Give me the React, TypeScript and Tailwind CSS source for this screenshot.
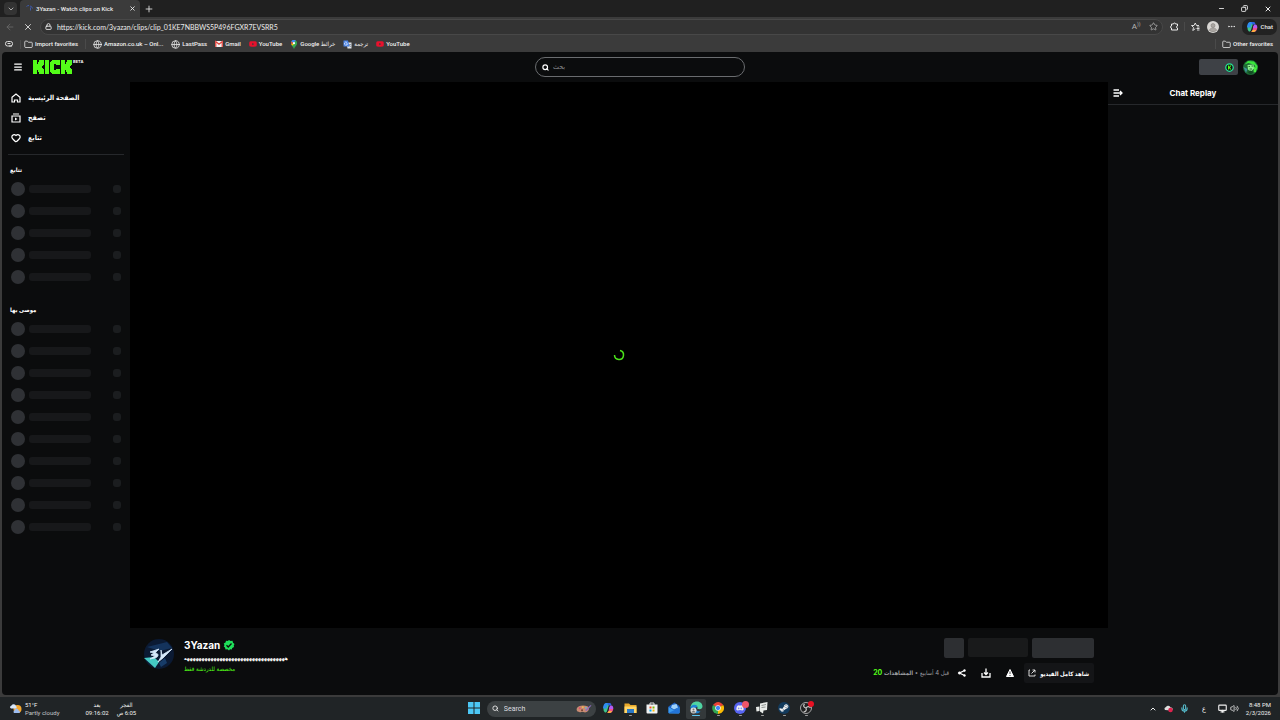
import type { ReactNode } from "react";
import {
  ArrowLeft,
  ChevronDown,
  ChevronUp,
  Copy,
  Ellipsis,
  Folder,
  Globe,
  Heart,
  Lock,
  Menu,
  Mic,
  Minus,
  Monitor,
  Plus,
  Search,
  Star,
  Volume2,
  X,
} from "lucide-react";
import { FaYoutube, FaDiscord, FaSteamSymbol } from "react-icons/fa";

const followed = [1, 2, 3, 4, 5];
const recommended = [1, 2, 3, 4, 5, 6, 7, 8, 9, 10];

const ui = "font-[Roboto,'DejaVu_Sans_Condensed','DejaVu_Sans',sans-serif]";

function CopilotIcon({ size }: { size: number }) {
  return (
    <svg width={size} height={size} viewBox="0 0 24 24">
      <path d="M4 8c1-4 3-6 6-6h5L10 18c-1 3-3 4-5 2-3-3-2-8-1-12z" fill="#3fc58b" />
      <path d="M4 5c1-2 3-3 5-3h6c-2 0-3 1-4 4L9 13H2c0-3 1-6 2-8z" fill="#2f8cf0" />
      <path d="M11 2h4c2 0 3 1 3.500 3l.5 2h-7z" fill="#2b62e0" />
      <path d="M15 22H9c2 0 3-1 4-4l2-8h5c3 0 3 3 2 6-1 4-3 6-7 6z" fill="#f0508c" />
      <path d="M18 7c4 0 5 3 4 7h-8l1-4c.5-2 1.500-3 3-3z" fill="#b45af2" />
      <path d="M9 22c2 0 3-1 4-4h7c-1 3-3 4-6 4z" fill="#ffb13d" />
    </svg>
  );
}

function KickLogo() {
  return (
    <svg width="41" height="16" viewBox="0 0 41 16" role="img" aria-label="Kick">
      <g fill="#53fc18">
        <path d="M1 1h4v4h1V3h1V1h5v5h-1v1h-1v2h1v1h1v5H7v-2H6v-2H5v4H1z" />
        <path d="M13 1h4v14h-4z" />
        <path d="M20 1h8v5h-4V5h-2v6h2v-1h4v5h-8v-1h-1v-1h-1V3h1V2h1z" />
        <path d="M29 1h4v4h1V3h1V1h5v5h-1v1h-1v2h1v1h1v5h-5v-2h-1v-2h-1v4h-4z" />
      </g>
    </svg>
  );
}

function MapPin() {
  return (
    <svg width="8" height="9" viewBox="0 0 18 20">
      <path d="M9 0C5 0 2 3 2 7c0 5 5 7 7 13 2-6 7-8 7-13 0-4-3-7-7-7z" fill="#34a853" />
      <path d="M9 0C6 0 4 1 3 3l4 4 6-6c-1-1-2-1-4-1z" fill="#4285f4" />
      <path d="M3 3C2 5 2 8 3 10l4-4z" fill="#ea4335" />
      <path d="M3 10l2 3 6-6-3-1z" fill="#fbbc04" />
      <circle cx="9" cy="7" r="2.500" fill="#fff" />
    </svg>
  );
}

function TranslateIcon() {
  return (
    <svg width="9" height="9" viewBox="0 0 18 18">
      <path d="M7 5h10v12H9z" fill="#dfe3e8" />
      <path d="M1 1h9l3 12H1z" fill="#4a84e8" />
      <path d="M9 7.500A3 3 0 1 1 8 5M9 7.500H6.500" stroke="#fff" strokeWidth="1.300" fill="none" />
      <path d="M12 9h4M14 8v1c0 2-1 3-2 4M13 11l3 3" stroke="#5b6b80" fill="none" />
    </svg>
  );
}

function GmailIcon() {
  return (
    <svg width="8" height="8" viewBox="0 0 16 14">
      <path d="M0 1h16v12H0z" fill="#f3f3f3" />
      <path d="M1.500 13V2L8 7.500 14.500 2v11" stroke="#e0433c" strokeWidth="2.500" fill="none" />
    </svg>
  );
}

function Bookmark({ icon, children }: { icon: ReactNode; children: ReactNode }) {
  return (
    <a href="#" className="flex items-center gap-[2px] whitespace-nowrap text-[6px] leading-[10px] font-medium text-[#f2f2f2]">
      {icon}
      <span>{children}</span>
    </a>
  );
}

function BrowserChrome() {
  return (
    <header className={`shrink-0 bg-[#3b3b3b] text-[#ececec] ${ui}`}>
      <div className="flex h-[17px] items-center bg-[#202020]">
        <button aria-label="Tab actions" className="ml-1 flex h-[13px] w-[13px] items-center justify-center rounded-[4px] bg-[#333]">
          <ChevronDown size={8} />
        </button>
        <div className="ml-[3px] flex h-full w-[120px] items-center rounded-t-[4px] bg-[#3b3b3b] pr-[3px] pl-[6px]">
          <svg width="7" height="7" viewBox="0 0 14 14" fill="none" stroke="#3f62c4" strokeWidth="1.600">
            <path d="M1 3a7 7 0 0 1 5-2M8 2a6 6 0 0 1 5 5M9 5v6" />
          </svg>
          <span className="ml-[3px] grow whitespace-nowrap text-[6px] font-medium">3Yazan - Watch clips on Kick</span>
          <button aria-label="Close tab" className="p-px"><X size={7} strokeWidth={3} /></button>
        </div>
        <button aria-label="New tab" className="ml-1"><Plus size={10} /></button>
        <div className="ml-auto flex items-center gap-4 pr-2">
          <button aria-label="Minimize"><Minus size={7} strokeWidth={3} /></button>
          <button aria-label="Restore"><Copy size={7} strokeWidth={3} className="-scale-x-100" /></button>
          <button aria-label="Close"><X size={8} strokeWidth={3} /></button>
        </div>
      </div>

      <div className="flex h-[19px] items-center pl-[5px]">
        <button aria-label="Back" className="text-[#6b6b6b]"><ArrowLeft size={10} /></button>
        <button aria-label="Stop" className="ml-2"><X size={10} /></button>
        <div className="ml-[7px] flex h-[16px] grow items-center rounded-full border border-[#484848] bg-[#333] px-1">
          <Lock size={7} strokeWidth={3} />
          <input
            aria-label="Address"
            defaultValue="https://kick.com/3yazan/clips/clip_01KE7NBBWS5P496FGXR7EVSRR5"
            className="ml-[5px] h-[12px] min-w-0 grow bg-transparent font-[Lato,sans-serif] text-[7px] outline-none"
          />
          <span className="text-[8px] text-[#b5b5b5]">A<sup className="text-[5px]">))</sup></span>
          <Star size={9} className="ml-2 text-[#b5b5b5]" />
        </div>
        <div className="flex items-center pl-[7px]">
          <button aria-label="Extensions">
            <svg width="9" height="9" viewBox="0 0 18 18" fill="none" stroke="currentColor" strokeWidth="2">
              <path d="M3 4h4a2 2 0 0 1 4 0h4v4a2 2 0 0 0 0 4v4H3v-4M3 4v4" />
              <path d="M3 8a2 2 0 0 0 0 4" />
            </svg>
          </button>
          <span className="ml-[5px] h-[9px] w-px bg-[#4a4a4a]" />
          <button aria-label="Favorites" className="ml-[6px]">
            <svg width="9" height="9" viewBox="0 0 18 18" fill="none" stroke="currentColor" strokeWidth="1.800">
              <path d="M16 7h-5L8.500 2 6 7H1l4 4-1.500 6 5-3.500" />
              <path d="M12 10h5M11 13h6M12 16h5" />
            </svg>
          </button>
          <button aria-label="Profile" className="ml-[7px]">
            <svg width="12" height="12" viewBox="0 0 24 24">
              <circle cx="12" cy="12" r="12" fill="#d9d7d4" />
              <circle cx="12" cy="9" r="4" fill="#aaa6a2" stroke="#77736f" />
              <path d="M5 19c0-7 14-7 14 0-4 3-10 3-14 0z" fill="#aaa6a2" stroke="#77736f" />
            </svg>
          </button>
          <button aria-label="Settings" className="ml-[8px]"><Ellipsis size={9} /></button>
          <button className="mr-[3px] ml-[6px] flex h-[16px] items-center gap-[3px] rounded-[7px] bg-[#222] px-1 text-[6px] font-medium">
            <CopilotIcon size={12} />
            Chat
          </button>
        </div>
      </div>

      <div className="flex h-[16px] items-center pl-[5px]">
        <svg width="8" height="8" viewBox="0 0 16 16" fill="none" stroke="#ddd" strokeWidth="2">
          <rect x="1" y="3" width="14" height="9" rx="4" />
          <path d="M5 7h6M8 12h6" />
        </svg>
        <span className="mr-[3px] ml-[7px] h-[9px] w-px bg-[#4a4a4a]" />
        <div className="flex items-center gap-[7px]">
          <Bookmark icon={<Folder size={9} />}>Import favorites</Bookmark>
          <div className="flex items-center gap-[8px] border-l border-[#4a4a4a] pl-[7px]">
            <Bookmark icon={<Globe size={9} />}>Amazon.co.uk – Onl...</Bookmark>
            <Bookmark icon={<Globe size={9} />}>LastPass</Bookmark>
            <Bookmark icon={<GmailIcon />}>Gmail</Bookmark>
            <Bookmark icon={<FaYoutube size={8} color="#e8112d" />}>YouTube</Bookmark>
            <Bookmark icon={<MapPin />}>Google خرائط</Bookmark>
            <Bookmark icon={<TranslateIcon />}>ترجمة</Bookmark>
            <Bookmark icon={<FaYoutube size={8} color="#e8112d" />}>YouTube</Bookmark>
          </div>
        </div>
        <div className="ml-auto border-l border-[#4a4a4a] pr-[7px] pl-[6px]">
          <Bookmark icon={<Folder size={9} />}>Other favorites</Bookmark>
        </div>
      </div>
    </header>
  );
}

function SkeletonRow() {
  return (
    <li className="flex h-[22px] items-center px-[9px]">
      <span className="h-[14px] w-[14px] rounded-full bg-[#2f3135]" />
      <span className="ml-[4px] h-[8px] w-[62px] rounded-[3px] bg-[#17181a]" />
      <span className="ml-auto h-[8px] w-[8px] rounded-[3px] bg-[#1b1d1f]" />
    </li>
  );
}

function Sidebar() {
  const link = "flex h-[20px] items-center gap-[7px] text-[7px] font-bold";
  return (
    <aside className="w-[128px] shrink-0 pt-[6px]">
      <nav className="px-[9px]">
        <a href="#" className={link}>
          <svg width="10" height="10" viewBox="0 0 20 20" fill="none" stroke="#fff" strokeWidth="2.400">
            <path d="M2 8.500L10 2l8 6.500V18h-5v-4H7v4H2z" />
          </svg>
          الصفحة الرئيسية
        </a>
        <a href="#" className={link}>
          <svg width="10" height="10" viewBox="0 0 20 20" fill="none" stroke="#fff" strokeWidth="2.400">
            <path d="M4 2h12M2 6h16v12H2z" />
            <path d="M8 9v6l5-3z" fill="#fff" stroke="none" />
          </svg>
          تصفح
        </a>
        <a href="#" className={link}>
          <Heart size={10} strokeWidth={3} />
          تتابع
        </a>
      </nav>
      <div className="mx-[6px] mt-[6px] h-px bg-[#26282b]" />
      <h2 className="mt-[9px] px-2 text-[6px] leading-[12px] font-bold">تتابع</h2>
      <ul className="mt-[2px]">{followed.map((n) => <SkeletonRow key={n} />)}</ul>
      <h2 className="mt-4 px-2 text-[6px] leading-[12px] font-bold">موصى بها</h2>
      <ul className="mt-[2px]">{recommended.map((n) => <SkeletonRow key={n} />)}</ul>
    </aside>
  );
}

function ClipInfo() {
  return (
    <section className="flex h-[67px] justify-between pt-[10px] pr-[14px] pl-[13px]">
      <div className="flex gap-[9px]">
        <svg width="32" height="32" viewBox="0 0 32 32">
          <circle cx="16" cy="16" r="15" fill="#0b1a33" />
          <path d="M1 20l11 10 4-6-5-5z" fill="#45c9c4" />
          <path d="M4 9l20-5 5 6-12 3z" fill="#14335c" />
          <path d="M16 25l6-5 2 5-6 4z" fill="#173c68" />
          <path d="M7 14l9-3-4 4c4 0 4 4 0 5l-5 1 5-3-4-1 3-2zM18 12l1 5 10-6-9 9-5 4 3-5z" fill="#d5e9fa" stroke="#d5e9fa" strokeWidth=".8" />
        </svg>
        <div>
          <div className="flex items-center gap-[3px]">
            <h1 className="text-[10px] leading-[14px] font-bold">3Yazan</h1>
            <svg width="12" height="12" viewBox="0 0 24 24">
              <path d="M12 2l3 2 4-.5 1 4 3 2.500-1.500 3L22 16l-3.500 2-1 3-3.500-.5L12 23l-3-2.500-4 .5-1-4-2.500-2L3 12 1.500 9 5 7l1-3.500 3.500.5z" fill="#1fe05a" />
              <path d="M7 12.500l3.500 3.500L17 9" stroke="#0b0c0d" strokeWidth="2.600" fill="none" />
            </svg>
          </div>
          <p className="h-[11px] text-[5px] leading-[12px] font-bold">ههههههههههههههههههههههههههههههههههه</p>
          <p className="text-[6px] leading-[11px] text-[#53fc18]">مخصصة للدردشة فقط</p>
        </div>
      </div>
      <div className="flex flex-col items-end gap-[5px]">
        <div className="flex gap-1">
          <span className="h-[20px] w-[20px] rounded-[2px] bg-[#2d2f32]" />
          <span className="h-[19px] w-[60px] rounded-[2px] bg-[#191a1b]" />
          <span className="h-[20px] w-[62px] rounded-[2px] bg-[#2d2f32]" />
        </div>
        <div className="flex items-center">
          <p dir="rtl" className="whitespace-nowrap text-[6px] text-[#9b9da0]">
            قبل 4 أسابيع • <span className="font-bold">المشاهدات</span> <b className="text-[7px] text-[#53fc18]">20</b>
          </p>
          <button aria-label="Share" className="ml-[8px]">
            <svg width="10" height="10" viewBox="0 0 20 20" fill="#fff" stroke="#fff">
              <path d="M15 5L5 10l10 5" fill="none" strokeWidth="2.500" />
              <circle cx="15" cy="5" r="2" /><circle cx="5" cy="10" r="2.500" /><circle cx="15" cy="15" r="2" />
            </svg>
          </button>
          <button aria-label="Download" className="ml-[14px]">
            <svg width="10" height="10" viewBox="0 0 20 20" fill="none" stroke="#fff" strokeWidth="2.600">
              <path d="M10 1v11M6 9l4 4 4-4M2 10v8h16v-8" />
            </svg>
          </button>
          <button aria-label="Report" className="ml-[14px]">
            <svg width="10" height="10" viewBox="0 0 20 20">
              <path d="M10 3l7 14H3z" fill="#fff" stroke="#fff" strokeWidth="2" strokeLinejoin="round" />
              <path d="M10 7v5M10 14v2" stroke="#0b0c0d" strokeWidth="1.500" />
            </svg>
          </button>
          <button className="ml-[9px] flex h-[20px] items-center gap-1 rounded-[2px] bg-[#141517] pr-[5px] pl-[4px] text-[6px] font-bold whitespace-nowrap">
            <svg width="8" height="8" viewBox="0 0 16 16" fill="none" stroke="#eee" strokeWidth="1.800">
              <path d="M4 2H2v12h12v-3M9 2h5v5M14 2L7 9" />
            </svg>
            شاهد كامل الفيديو
          </button>
        </div>
      </div>
    </section>
  );
}

function KickPage() {
  return (
    <div className="mx-[2px] flex min-h-0 grow flex-col overflow-hidden rounded-[4px] bg-[#0b0c0d] font-[Inter,'DejaVu_Sans_Condensed','DejaVu_Sans',sans-serif] text-white">
      <div className="grid h-[30px] shrink-0 grid-cols-[1fr_210px_1fr] items-center">
        <div className="flex items-center gap-[9px] pl-[11px]">
          <button aria-label="Menu"><Menu size={10} strokeWidth={3} /></button>
          <a href="#" className="flex items-start">
            <KickLogo />
            <span className="text-[4px] leading-[6px] font-bold">BETA</span>
          </a>
        </div>
        <label className="flex h-[20px] items-center gap-1 rounded-full border border-[#6a6c6f] px-[6px]">
          <Search size={7} strokeWidth={4} />
          <input type="search" placeholder="بحث" aria-label="بحث" className="min-w-0 grow bg-transparent text-[7px] outline-none placeholder:text-[#8b8d90]" />
        </label>
        <div className="flex items-center justify-end gap-[5px] pr-[20px]">
          <button aria-label="Balance" className="flex h-[16px] w-[39px] items-center justify-end rounded-[2px] bg-[#3e4146] pr-1">
            <svg width="9" height="9" viewBox="0 0 18 18">
              <circle cx="9" cy="9" r="7.500" fill="#111" stroke="#24e39a" strokeWidth="2.500" />
              <path d="M6 5h2v3l2-3h3l-3 4 3 4h-3l-2-3v3H6z" fill="#53fc18" />
            </svg>
          </button>
          <button aria-label="Account">
            <svg width="15" height="15" viewBox="0 0 30 30">
              <circle cx="15" cy="15" r="15" fill="#1e6b35" />
              <path d="M3 9l7-7 12 1 7 9-1 9-5-11-12-4z" fill="#39e63c" />
              <path d="M1 14l8 4-3 8z" fill="#3d8f98" />
              <path d="M22 13l5 3-1 8-5 1z" fill="#45f03e" />
              <path d="M9 10l12-1 1 8-6 6-6-4z" fill="#8df58c" />
              <path d="M11 13h3M17 12h3M13 18h5" stroke="#10451c" strokeWidth="1.500" />
              <path d="M9 24l6-3 7 3-7 5z" fill="#134e24" />
            </svg>
          </button>
        </div>
      </div>

      <div className="flex min-h-0 grow">
        <Sidebar />
        <main className="flex min-w-0 grow flex-col">
          <div className="flex grow items-center justify-center bg-black">
            <svg width="12" height="12" viewBox="0 0 24 24" fill="none" stroke="#4be31a" strokeWidth="3">
              <path d="M14 3a9 9 0 1 1-11 9" />
            </svg>
          </div>
          <ClipInfo />
        </main>
        <aside className="w-[170px] shrink-0">
          <div className="grid h-[23px] grid-cols-[20px_1fr_20px] items-center border-b border-[#26282b]">
            <button aria-label="Collapse chat" className="ml-[5px]">
              <svg width="10" height="10" viewBox="0 0 20 20" fill="none" stroke="#fff" strokeWidth="2.600">
                <path d="M1 4h11M1 10h17M1 16h11M14 6l4 4-4 4" />
              </svg>
            </button>
            <h2 className="text-center text-[8px] font-bold">Chat Replay</h2>
          </div>
        </aside>
      </div>
    </div>
  );
}

function TaskIcon({ label, active, running, children }: { label: string; active?: boolean; running?: boolean; children: ReactNode }) {
  return (
    <button
      aria-label={label}
      className={`flex h-[20px] w-[20px] flex-col items-center justify-center gap-px rounded-[2px] ${active ? "bg-[#34393b]" : ""}`}
    >
      {children}
      <span className={`h-px rounded-full ${active ? "w-[8px] bg-[#5cc3f0]" : running ? "w-[3px] bg-[#9a9a9a]" : "w-0"}`} />
    </button>
  );
}

function Taskbar() {
  return (
    <footer className={`mt-[2px] grid h-[23px] shrink-0 grid-cols-[1fr_auto_1fr] items-center bg-[#202426] text-[6px] leading-[8px] text-[#f0f0f0] ${ui}`}>
      <div className="flex items-center pl-[9px]">
        <svg width="13" height="13" viewBox="0 0 26 26">
          <circle cx="17" cy="14" r="8" fill="#f5a62c" />
          <path d="M2 11a4 4 0 0 1 3-4 5 5 0 0 1 9 1 3 3 0 0 1 0 5H4z" fill="#d7e6fa" />
          <path d="M10 22a3 3 0 0 1 1-5 4 4 0 0 1 8 0 3 3 0 0 1 2 5z" fill="#9cbcf0" />
        </svg>
        <p className="ml-[3px]">51°F<br /><span className="text-[#c4c6c8]">Partly cloudy</span></p>
        <p className="ml-[26px] text-center">بعد<br />09:16:02</p>
        <p dir="rtl" className="ml-[8px] text-center">الفجر<br />6:05 ص</p>
      </div>

      <div className="flex items-center gap-[2px]">
        <TaskIcon label="Start">
          <svg width="12" height="12" viewBox="0 0 24 24" fill="#4cc7f5">
            <path d="M0 0h11v11H0zM13 0h11v11H13zM0 13h11v11H0zM13 13h11v11H13z" />
          </svg>
        </TaskIcon>
        <label className="ml-px flex h-[16px] w-[109px] items-center gap-[5px] rounded-full bg-[#3c4143] pr-[4px] pl-[5px]">
          <Search size={9} strokeWidth={3} />
          <input placeholder="Search" aria-label="Search" className="min-w-0 grow bg-transparent text-[7px] outline-none placeholder:text-[#dcdee0]" />
          <svg width="21" height="12" viewBox="0 0 42 24">
            <path d="M2 11C4 3 20 1 30 5c7 3 5 12-2 15-6 3-10-2-14 0-5 2-14 0-12-9z" fill="#c98b72" />
            <path d="M24 15L38 2l3 1-13 14z" fill="#8e6bc0" />
            <circle cx="10" cy="10" r="2.500" fill="#e14e73" /><circle cx="18" cy="7" r="2.500" fill="#f4c34d" />
            <circle cx="26" cy="9" r="2.500" fill="#63b8d6" /><circle cx="16" cy="15" r="2.500" fill="#71402f" />
          </svg>
        </label>
        <TaskIcon label="Copilot"><CopilotIcon size={12} /></TaskIcon>
        <TaskIcon label="File Explorer" running>
          <svg width="13" height="12" viewBox="0 0 26 22">
            <path d="M1 2h9l3 3h12v16H1z" fill="#e9a92b" />
            <path d="M1 8h24v13H1z" fill="#ffd668" />
            <path d="M6 13h14v8H6z" fill="#2b79c7" />
          </svg>
        </TaskIcon>
        <TaskIcon label="Store">
          <svg width="12" height="12" viewBox="0 0 24 24">
            <path d="M8 6V2h8v4" stroke="#ddd" strokeWidth="2" fill="none" />
            <path d="M1 5h22v16q0 2-2 2H3q-2 0-2-2z" fill="#f0f2f3" />
            <path d="M7 9h4v4H7z" fill="#f25022" /><path d="M13 9h4v4h-4z" fill="#7fba00" />
            <path d="M7 15h4v4H7z" fill="#00a4ef" /><path d="M13 15h4v4h-4z" fill="#ffb900" />
          </svg>
        </TaskIcon>
        <TaskIcon label="Outlook">
          <svg width="12" height="12" viewBox="0 0 24 24">
            <path d="M1 9L13 1l10 7v14H1z" fill="#1b5fc1" />
            <path d="M8 6l9-2 3 7-8 4-6-4z" fill="#9fd2fb" />
            <path d="M1 10l12 7 10-7v11q0 2-2 2H3q-2 0-2-2z" fill="#3b9cf0" />
            <path d="M1 22l22-11v10q0 2-2 2z" fill="#2274d8" />
          </svg>
        </TaskIcon>
        <TaskIcon label="Edge" active>
          <svg width="13" height="13" viewBox="0 0 26 26">
            <path d="M1 13C2 5 7 1 14 1c7 0 11 5 11 10 0 4-4 6-8 5-2 0-3-1-2-3 0-4-9-6-14 0z" fill="#4fd3a2" />
            <path d="M1 13C3 6 14 6 15 12c-6-1-7 9 6 9-6 7-20 4-20-8z" fill="#1c83d6" />
            <circle cx="7" cy="19" r="6" fill="#ddd" />
            <circle cx="7" cy="17" r="2" fill="#777" /><path d="M3 23c0-4 8-4 8 0z" fill="#777" />
          </svg>
        </TaskIcon>
        <TaskIcon label="Chrome" running>
          <svg width="12" height="12" viewBox="0 0 24 24">
            <path d="M12 12L2 6a12 12 0 0 1 20.500 0z" fill="#ea4335" />
            <path d="M12 12l10.500-6A12 12 0 0 1 12 24z" fill="#fbbc04" />
            <path d="M12 12v12A12 12 0 0 1 2 6z" fill="#34a853" />
            <circle cx="12" cy="12" r="5.500" fill="#fff" /><circle cx="12" cy="12" r="4.300" fill="#4285f4" />
          </svg>
        </TaskIcon>
        <TaskIcon label="Discord" running>
          <span className="relative flex h-[12px] w-[12px] items-center justify-center rounded-full bg-[#5865f2]">
            <FaDiscord size={8} />
            <span className="absolute -top-px -right-[3px] h-[7px] w-[7px] rounded-full bg-[#f0566a]" />
          </span>
        </TaskIcon>
        <TaskIcon label="Epic" running>
          <svg width="12" height="12" viewBox="0 0 24 24" fill="#e9ece9">
            <path d="M8 3l15-3-1 16-7 1-1 6-6-4z" /><path d="M0 10l7-1v9l-6 1z" />
            <path d="M11 7l9-2M11 11l8-1" stroke="#5a605e" strokeWidth="1.300" />
          </svg>
        </TaskIcon>
        <TaskIcon label="Steam" running>
          <span className="flex h-[12px] w-[12px] items-center justify-center rounded-full bg-[#123a5c]"><FaSteamSymbol size={10} /></span>
        </TaskIcon>
        <TaskIcon label="OBS" running>
          <span className="relative">
            <svg width="12" height="12" viewBox="0 0 24 24" fill="none" stroke="#c9c9c9" strokeWidth="1.600">
              <circle cx="12" cy="12" r="11" fill="#222" />
              <path d="M12 12c-5-1-6-5-3-8M12 12c3-4 7-3 9 0M12 12c2 5-1 8-5 8" strokeWidth="2.400" />
            </svg>
            <span className="absolute -top-px -right-[2px] h-[6px] w-[6px] rounded-full bg-[#e81123]" />
          </span>
        </TaskIcon>
      </div>

      <div className="flex items-center justify-end pr-[9px]">
        <button aria-label="Show hidden icons"><ChevronUp size={8} strokeWidth={3} /></button>
        <svg className="ml-[7px]" width="9" height="9" viewBox="0 0 18 18">
          <path d="M2 12a4 4 0 0 1 2-6 5 5 0 0 1 9 1 3 3 0 0 1 2 6z" fill="#ddd" />
          <circle cx="13" cy="12" r="4.500" fill="#e0224e" />
        </svg>
        <Mic size={9} strokeWidth={3} className="ml-[7px] text-[#55b8c8]" />
        <span className="ml-[13px] text-[7px]">ع</span>
        <Monitor size={9} strokeWidth={3} className="ml-[12px]" />
        <Volume2 size={9} className="ml-[3px]" />
        <p className="ml-[7px] text-right">8:48 PM<br />2/3/2026</p>
      </div>
    </footer>
  );
}

export default function App() {
  return (
    <div className="flex h-screen flex-col overflow-hidden bg-[#3b3b3b]">
      <BrowserChrome />
      <KickPage />
      <Taskbar />
    </div>
  );
}
